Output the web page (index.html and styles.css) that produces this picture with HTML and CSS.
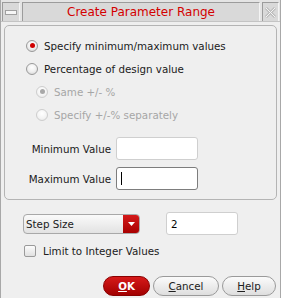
FILE: index.html
```html
<!DOCTYPE html>
<html>
<head>
<meta charset="utf-8">
<link rel="stylesheet" href="styles.css">
</head>
<body>
<div class="window">
  <div class="titlebar">
    <div class="tb-box tb-min"><span class="min-bar"></span></div>
    <div class="tb-box tb-title">Create Parameter Range</div>
    <div class="tb-box tb-close">
      <svg width="13" height="13" viewBox="0 0 13 13"><path d="M2 2 L11 11 M11 2 L2 11" stroke="#bcbcbc" stroke-width="3" fill="none"/><path d="M2 2 L11 11 M11 2 L2 11" stroke="#f4f4f4" stroke-width="1" fill="none"/></svg>
    </div>
  </div>
  <div class="content">
    <div class="group">
      <div class="row"><span class="radio checked"></span><span>Specify minimum/maximum values</span></div>
      <div class="row"><span class="radio"></span><span>Percentage of design value</span></div>
      <div class="row sub disabled"><span class="radio checked"></span><span>Same +/- %</span></div>
      <div class="row sub disabled"><span class="radio"></span><span>Specify +/-% separately</span></div>
      <div class="fields">
        <label class="flabel">Minimum Value</label><div class="input"></div>
        <label class="flabel">Maximum Value</label><div class="input focus"><span class="caret"></span></div>
      </div>
    </div>
    <div class="lower">
      <div class="step-row">
        <div class="combo"><span class="combo-text">Step Size</span><span class="combo-btn"><svg width="7" height="4" viewBox="0 0 7 4"><path d="M0 0 H7 L3.5 4 Z" fill="#fff"/></svg></span></div>
        <div class="input step-input">2</div>
      </div>
      <div class="check-row"><span class="checkbox"></span><span>Limit to Integer Values</span></div>
    </div>
    <div class="buttons">
      <div class="btn primary"><u>O</u>K</div>
      <div class="btn"><u>C</u>ancel</div>
      <div class="btn"><u>H</u>elp</div>
    </div>
  </div>
</div>
</body>
</html>
```

FILE: styles.css
```css
html, body {
  margin: 0;
  padding: 0;
}
body {
  width: 281px;
  height: 298px;
  overflow: hidden;
  background: #efefef;
  font-family: "DejaVu Sans", sans-serif;
  font-size: 10.3px;
  color: #202020;
}
.window {
  box-sizing: border-box;
  width: 281px;
  height: 298px;
  border-left: 1px solid #a8a8a8;
  border-right: 1px solid #a8a8a8;
  display: flex;
  flex-direction: column;
}
.titlebar {
  display: flex;
  gap: 2px;
  padding: 2px 1px 0 1px;
  height: 21px;
  box-sizing: border-box;
  background: #e4e4e4;
}
.tb-box {
  box-sizing: border-box;
  height: 19px;
  background: #d9d9d9;
  border-top: 1px solid #9c9c9c;
  border-left: 1px solid #9c9c9c;
  border-right: 1px solid #f4f4f4;
  display: flex;
  align-items: center;
  justify-content: center;
}
.tb-min {
  width: 18px;
}
.min-bar {
  width: 10px;
  height: 3px;
  border: 1px solid #a0a0a0;
  background: #f6f6f6;
}
.tb-title {
  flex: 1;
  color: #d40000;
  font-size: 12px;
}
.tb-close {
  width: 17px;
}
.content {
  flex: 1;
  display: flex;
  flex-direction: column;
  padding: 3px 3px 0 3px;
  border-top: 1px solid #c4c4c4;
}
.group {
  border: 1px solid #b4b4b4;
  border-radius: 5px;
  padding: 8px 0 9px 21px;
  display: flex;
  flex-direction: column;
}
.row {
  height: 23px;
  display: flex;
  align-items: center;
  gap: 6px;
  white-space: nowrap;
}
.row.sub {
  padding-left: 10px;
}
.row.disabled {
  color: #a6a6a6;
}
.radio {
  box-sizing: border-box;
  width: 12px;
  height: 12px;
  border-radius: 50%;
  border: 1px solid #9a9a9a;
  background: radial-gradient(circle at 50% 35%, #ffffff 0%, #f0f0f0 50%, #cfcfcf 100%);
  position: relative;
  flex: none;
}
.radio.checked::after {
  content: "";
  position: absolute;
  left: 2.5px;
  top: 2.5px;
  width: 5px;
  height: 5px;
  border-radius: 50%;
  background: #d00000;
}
.disabled .radio {
  border-color: #cdcdcd;
  background: radial-gradient(circle at 50% 35%, #ffffff 0%, #f3f3f3 60%, #e0e0e0 100%);
}
.disabled .radio.checked::after {
  background: #a8a8a8;
}
.fields {
  display: grid;
  grid-template-columns: 85px 82px;
  column-gap: 5px;
  row-gap: 7px;
  align-items: center;
  margin-top: 11px;
}
.flabel {
  text-align: right;
  white-space: nowrap;
}
.input {
  box-sizing: border-box;
  height: 23px;
  background: #fff;
  border: 1px solid #cfcfcf;
  border-radius: 3px;
  display: flex;
  align-items: center;
  padding-left: 4px;
}
.input.focus {
  border-color: #7d7d7d;
}
.caret {
  width: 1px;
  height: 13px;
  background: #000;
}
.lower {
  padding: 12px 0 0 19px;
  display: flex;
  flex-direction: column;
}
.step-row {
  display: flex;
  align-items: center;
  gap: 26px;
}
.combo {
  box-sizing: border-box;
  width: 117px;
  height: 20px;
  border: 1px solid #a8a8a8;
  border-radius: 4px;
  background: linear-gradient(#fafafa, #e2e2e2);
  display: flex;
  align-items: center;
  overflow: hidden;
}
.combo-text {
  flex: 1;
  padding-left: 2px;
}
.combo-btn {
  width: 16px;
  height: 100%;
  background: linear-gradient(#d41a1a, #a80000);
  display: flex;
  align-items: center;
  justify-content: center;
}
.step-input {
  width: 72px;
  color: #000;
}
.check-row {
  display: flex;
  align-items: center;
  gap: 7px;
  margin-top: 10px;
  padding-left: 1px;
}
.checkbox {
  box-sizing: border-box;
  width: 12px;
  height: 12px;
  border: 1px solid #9a9a9a;
  border-radius: 2px;
  background: linear-gradient(#fcfcfc, #e0e0e0);
}
.buttons {
  margin-top: auto;
  display: flex;
  justify-content: flex-end;
  gap: 3px;
  padding: 0 1px 2px 0;
}
.btn {
  box-sizing: border-box;
  height: 20px;
  border: 1px solid #9a9a9a;
  border-radius: 10px;
  background: linear-gradient(#fbfbfb, #dedede);
  display: flex;
  align-items: center;
  justify-content: center;
  width: 54px;
}
.btn.primary {
  width: 47px;
  border-color: #8a0000;
  background: linear-gradient(#d61a1a, #a20000);
  color: #fff;
  font-weight: bold;
}
.btn:nth-child(2) {
  width: 66px;
}
```
